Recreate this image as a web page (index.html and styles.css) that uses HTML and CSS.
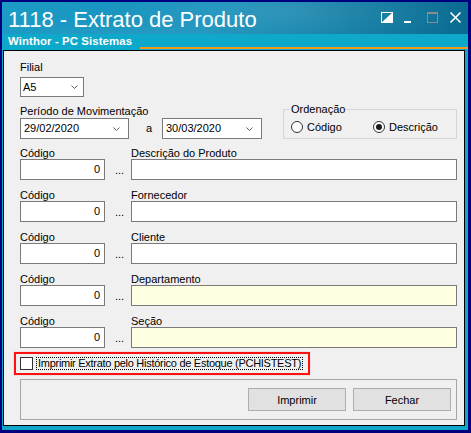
FILE: index.html
```html
<!DOCTYPE html>
<html lang="pt-BR">
<head>
<meta charset="utf-8">
<title>1118 - Extrato de Produto</title>
<link rel="stylesheet" href="styles.css">
</head>
<body>
<div class="window">
  <header class="titlebar">
    <div class="titles">
      <div class="app-title">1118 - Extrato de Produto</div>
      <div class="app-sub">Winthor - PC Sistemas</div>
    </div>
    <svg class="controls" width="81" height="13" viewBox="0 0 81 13" aria-hidden="true">
      <!-- restore / dock toggle -->
      <rect x="0.5" y="1.5" width="11" height="10" fill="none" stroke="#fff" stroke-width="1"/>
      <polygon points="11.5,1.5 11.5,11.5 0.5,11.5" fill="#fff"/>
      <!-- minimize -->
      <rect x="23" y="10" width="7" height="2" fill="#fff"/>
      <!-- maximize (disabled) -->
      <rect x="46.5" y="1.5" width="10" height="10" fill="none" stroke="#8c8c8c" stroke-width="1"/>
      <rect x="46" y="1" width="11" height="2" fill="#8c8c8c"/>
      <!-- close -->
      <path d="M69.5 1.5 L79.5 11.5 M79.5 1.5 L69.5 11.5" stroke="#fff" stroke-width="1.6" fill="none"/>
    </svg>
  </header>

  <div class="frame">
    <main class="client">
      <div class="field">
        <div class="lbl">Filial</div>
        <div class="combo combo-filial">
          <span class="combo-text">A5</span>
          <svg class="chev" width="7" height="4" viewBox="0 0 7 4"><polyline points="0.5,0.5 3.5,3.5 6.5,0.5"/></svg>
        </div>
      </div>

      <div class="period-row">
        <div class="period">
          <div class="lbl">Período de Movimentação</div>
          <div class="dates">
            <div class="combo combo-date">
              <span class="combo-text">29/02/2020</span>
              <svg class="chev" width="7" height="4" viewBox="0 0 7 4"><polyline points="0.5,0.5 3.5,3.5 6.5,0.5"/></svg>
            </div>
            <span class="sep">a</span>
            <div class="combo combo-date2">
              <span class="combo-text">30/03/2020</span>
              <svg class="chev" width="7" height="4" viewBox="0 0 7 4"><polyline points="0.5,0.5 3.5,3.5 6.5,0.5"/></svg>
            </div>
          </div>
        </div>

        <div class="group">
          <span class="legend">Ordenação</span>
          <div class="radios">
            <div class="radio-item"><span class="radio"></span><span>Código</span></div>
            <div class="radio-item"><span class="radio checked"></span><span>Descrição</span></div>
          </div>
        </div>
      </div>

      <div class="lookup">
        <div class="lbl">Código</div>
        <div class="lbl">&nbsp;</div>
        <div class="lbl">Descrição do Produto</div>
        <div class="input code">0</div>
        <div class="dots">...</div>
        <div class="input"></div>
      </div>

      <div class="lookup">
        <div class="lbl">Código</div>
        <div class="lbl">&nbsp;</div>
        <div class="lbl">Fornecedor</div>
        <div class="input code">0</div>
        <div class="dots">...</div>
        <div class="input"></div>
      </div>

      <div class="lookup">
        <div class="lbl">Código</div>
        <div class="lbl">&nbsp;</div>
        <div class="lbl">Cliente</div>
        <div class="input code">0</div>
        <div class="dots">...</div>
        <div class="input"></div>
      </div>

      <div class="lookup">
        <div class="lbl">Código</div>
        <div class="lbl">&nbsp;</div>
        <div class="lbl">Departamento</div>
        <div class="input code">0</div>
        <div class="dots">...</div>
        <div class="input readonly"></div>
      </div>

      <div class="lookup">
        <div class="lbl">Código</div>
        <div class="lbl">&nbsp;</div>
        <div class="lbl">Seção</div>
        <div class="input code">0</div>
        <div class="dots">...</div>
        <div class="input readonly"></div>
      </div>

      <div class="highlight">
        <span class="checkbox"></span>
        <span class="check-label">Imprimir Extrato pelo Histórico de Estoque (PCHISTEST)</span>
      </div>

      <div class="actions">
        <button class="btn" type="button">Imprimir</button>
        <button class="btn" type="button">Fechar</button>
      </div>
    </main>
  </div>
</div>
</body>
</html>
```

FILE: styles.css
```css
* {
  box-sizing: border-box;
}

body {
  margin: 0;
  font-family: "Liberation Sans", Arial, sans-serif;
  font-size: 11px;
  color: #000;
  background: #fff;
}

/* outer window frame */
.window {
  width: 471px;
  height: 433px;
  border-style: solid;
  border-color: #00007e;
  border-width: 2px 3px 3px 2px;
  background: #12a7c9;
  display: flex;
  flex-direction: column;
}

/* title bar */
.titlebar {
  height: 48px;
  flex: none;
  display: flex;
  align-items: flex-start;
  padding: 6px 6px 0 6px;
  color: #fff;
  background:
    linear-gradient(#f39a1b, #f39a1b) no-repeat right 0 bottom 1px / calc(100% - 138px) 2px,
    linear-gradient(#0fa8ca, #0aa9cb) no-repeat left 0 bottom 0 / 100% 16px,
    radial-gradient(ellipse 260px 60px at 62% 20%, rgba(255, 255, 255, 0.13), rgba(255, 255, 255, 0) 70%),
    radial-gradient(ellipse 200px 50px at 28% 110%, rgba(255, 255, 255, 0.12), rgba(255, 255, 255, 0) 70%),
    linear-gradient(90deg, #1b9bc5 0%, #1791bc 45%, #0d7aa2 75%, #0a6b91 100%);
}

.titles {
  display: flex;
  flex-direction: column;
}

.app-title {
  font-size: 22px;
  line-height: 24px;
  white-space: nowrap;
}

.app-sub {
  margin-top: 3px;
  font-weight: bold;
  font-size: 11.4px;
  line-height: 13px;
  letter-spacing: 0.1px;
  white-space: nowrap;
}

.controls {
  margin-left: auto;
  margin-top: 3px;
}

/* teal border around the client area */
.frame {
  flex: 1;
  display: flex;
  padding: 0 3px 4px 1px;
}

.client {
  flex: 1;
  border: 1px solid #000;
  background: #f0f0f0;
  padding: 10px 7px 0 16px;
  display: flex;
  flex-direction: column;
}

.lbl {
  line-height: 12px;
  white-space: nowrap;
}

/* combo boxes */
.combo {
  display: flex;
  align-items: center;
  background: #fff;
  border: 1px solid #7a7a7a;
  padding: 0 5px 0 2px;
}

.combo-text {
  flex: 1;
  line-height: 13px;
}

.chev {
  fill: none;
  stroke: #5a5a5a;
  stroke-width: 1;
}

.combo-filial {
  margin-top: 4px;
  width: 64px;
  height: 20px;
}

.period-row {
  margin-top: 8px;
  display: flex;
  align-items: flex-start;
}

.dates {
  margin-top: 1px;
  display: flex;
  align-items: center;
}

.combo-date,
.combo-date2 {
  height: 21px;
  padding-left: 3px;
  padding-right: 8px;
}

.combo-date {
  width: 109px;
}

.combo-date2 {
  width: 100px;
}

.sep {
  width: 33px;
  padding-left: 17px;
  line-height: 13px;
}

/* Ordenação group box */
.group {
  position: relative;
  margin-left: auto;
  margin-top: 4px;
  width: 174px;
  height: 30px;
  border: 1px solid #d6d6d6;
  padding: 11px 0 0 7px;
}

.legend {
  position: absolute;
  left: 6px;
  top: -7px;
  padding: 0 1px;
  background: #f0f0f0;
  line-height: 12px;
}

.radios {
  display: flex;
}

.radio-item {
  display: flex;
  align-items: center;
  gap: 4px;
  line-height: 12px;
}

.radio-item:first-child {
  width: 82px;
}

.radio {
  width: 12px;
  height: 12px;
  border-radius: 50%;
  border: 1px solid #333;
  background: #fff;
  display: flex;
  align-items: center;
  justify-content: center;
}

.radio.checked::after {
  content: "";
  width: 6px;
  height: 6px;
  border-radius: 50%;
  background: #1a1a1a;
}

/* code + description rows */
.lookup {
  margin-top: 8px;
  display: grid;
  grid-template-columns: 85px 26px 1fr;
  grid-template-rows: 12px 21px;
}

.lookup + .lookup {
  margin-top: 9px;
}

.input {
  height: 21px;
  background: #fff;
  border: 1px solid #7a7a7a;
  line-height: 19px;
  padding: 0 4px;
}

.input.code {
  text-align: right;
}

.input.readonly {
  background: #ffffe1;
}

.dots {
  align-self: end;
  line-height: 13px;
  padding: 0 0 3px 10px;
}

/* highlighted option row */
.highlight {
  margin-top: 4px;
  margin-left: -6px;
  width: 296px;
  height: 23px;
  border: 2px solid #ff1010;
  box-shadow: 0 0 1px 0 #ff9090;
  display: flex;
  align-items: center;
  padding-left: 4px;
}

.checkbox {
  width: 13px;
  height: 13px;
  border: 1px solid #333;
  background: #fff;
  flex: none;
}

.check-label {
  margin-left: 3px;
  border: 1px dotted #000;
  line-height: 11px;
  padding: 0 1px 0 1px;
  letter-spacing: -0.28px;
  white-space: nowrap;
}

/* bottom button panel */
.actions {
  margin-top: 4px;
  height: 41px;
  border: 1px solid #a6a6a6;
  display: flex;
  justify-content: flex-end;
  align-items: flex-start;
  gap: 7px;
  padding: 8px 5px 0 0;
}

.btn {
  width: 98px;
  height: 23px;
  background: #e1e1e1;
  border: 1px solid #adadad;
  font-family: inherit;
  font-size: 11px;
  color: #000;
  padding: 0;
}
```
